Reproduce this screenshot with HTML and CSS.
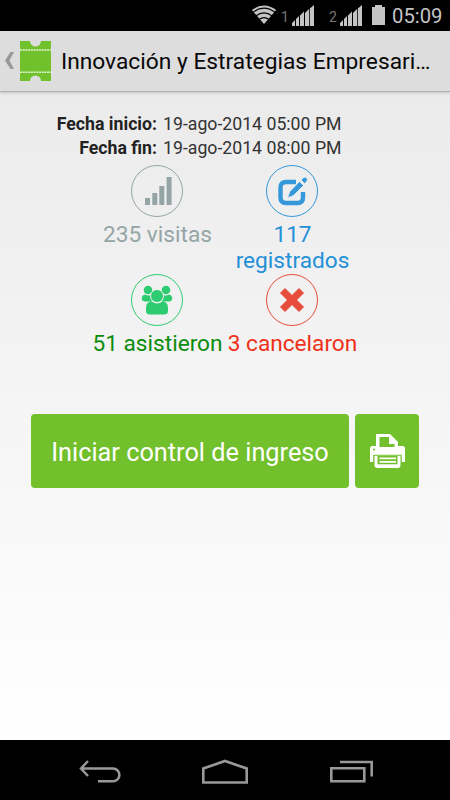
FILE: index.html
```html
<!DOCTYPE html>
<html lang="es">
<head>
<meta charset="utf-8">
<title>Innovación y Estrategias Empresariales</title>
<link rel="stylesheet" href="styles.css">
</head>
<body>
<div class="screen">
  <div class="status">
    <svg class="wifi" width="26" height="20" viewBox="0 0 26 20"><path d="M13 19 .8 5Q13-4 25.2 5Z" fill="#c4c4c4"/><path d="M2 7.200Q13-1 24 7.200M4.800 11Q13 4.800 21.200 11M8 14.500Q13 10.800 18 14.500" fill="none" stroke="#000" stroke-width="1.100"/></svg>
    <span class="sim sim1">1</span>
    <svg class="signal" width="22" height="21" viewBox="0 0 22 21"><path d="M0 21v-3l3-3v6zM4 21v-7l3-3v10zM8 21V10.500L12 6.500V21zM13 21V8L17 4v17zM17.800 21V3.500L22 0v21z" fill="#c4c4c4"/></svg>
    <span class="sim sim2">2</span>
    <svg class="signal" width="22" height="21" viewBox="0 0 22 21"><path d="M0 21v-3l3-3v6zM4 21v-7l3-3v10zM8 21V10.500L12 6.500V21zM13 21V8L17 4v17zM17.800 21V3.500L22 0v21z" fill="#c4c4c4"/></svg>
    <svg class="battery" width="13" height="20" viewBox="0 0 13 20"><path d="M3 0h7v2h3v18H0V2h3z" fill="#c4c4c4"/></svg>
    <span class="clock">05:09</span>
  </div>

  <header class="bar">
    <svg class="up" width="10" height="20" viewBox="0 0 10 20"><path d="M5.500 1H9L4.500 9.500 9 18H5.500L0 9.500z" fill="#999"/></svg>
    <svg class="logo" width="31" height="40" viewBox="0 0 31 40"><path d="M0 0h10a5.500 5.500 0 0 0 11 0h10v40H21a5.500 5.500 0 0 0-11 0H0z" fill="#70c12c"/><path d="M0 9h31M0 31.200h31" stroke="#e2f2d4" stroke-width="1.500" stroke-dasharray="2 .7"/></svg>
    <h1 class="title">Innovación y Estrategias Empresari…</h1>
  </header>

  <main class="content">
    <dl class="dates">
      <dt>Fecha inicio:</dt><dd>19-ago-2014 05:00 PM</dd>
      <dt>Fecha fin:</dt><dd>19-ago-2014 08:00 PM</dd>
    </dl>

    <section class="stats">
      <div class="stat visits">
        <svg width="52" height="52" viewBox="0 0 52 52" fill="#95a5a6"><circle cx="26" cy="26" r="25.500" fill="none" stroke="#95a5a6"/><path d="M14 33h5v7h-5zM21.300 28h5v12h-5zM28.300 21h5v19h-5zM35.600 12h5v28h-5z"/></svg>
        <span class="t-visits">235 visitas</span>
      </div>
      <div class="stat registered">
        <svg width="52" height="52" viewBox="0 0 52 52" fill="#3498db"><circle cx="26" cy="26" r="25.500" fill="none" stroke="#3498db"/><path d="M30 17H20q-5.500 0-5.500 5.500v10q0 5.500 5.500 5.500h11.500q5.500 0 5.500-5.500V27" fill="none" stroke="#3498db" stroke-width="4.400"/><path d="M21.500 33l2.300-6.500L33.500 16.500l4 4L27.500 30.500zM35 15l2.300-2.300q2-1.300 3.400.2 1.400 1.600.2 3.400L38.600 18.600z" stroke="#efefef" stroke-width=".8"/></svg>
        <span class="t-registered">117 registrados</span>
      </div>
      <div class="stat attended">
        <svg width="52" height="52" viewBox="0 0 52 52" fill="#2ecc71"><circle cx="26" cy="26" r="25.500" fill="none" stroke="#2ecc71"/><circle cx="17" cy="16" r="4.300"/><circle cx="35" cy="16" r="4.300"/><path d="M14 20.500q3 1.800 5.500.5 0 4 2 6.500h-8.300q-2.800-1-2.400-4 .3-2.500 3.200-3zM38 20.500q-3 1.800-5.500.5 0 4-2 6.500h8.300q2.800-1 2.400-4-.3-2.500-3.200-3z"/><circle cx="26" cy="22" r="6.500" stroke="#f1f1f1"/><path d="M20.500 27.500q5.500 4 11 0 5.500 0 5.500 6.500v3q0 3.500-4 3.500H19q-4 0-4-3.500v-3q0-6.500 5.500-6.500z"/></svg>
        <span class="t-attended">51 asistieron</span>
      </div>
      <div class="stat canceled">
        <svg width="52" height="52" viewBox="0 0 52 52" fill="#e74c3c"><circle cx="26" cy="26" r="25.500" fill="none" stroke="#e74c3c"/><path d="M19 14.500l7 7 7-7 4.500 4.500-7 7 7 7-4.500 4.500-7-7-7 7-4.500-4.500 7-7-7-7z" stroke="#e74c3c" stroke-width="1" stroke-linejoin="round"/></svg>
        <span class="t-canceled">3 cancelaron</span>
      </div>
    </section>

    <div class="actions">
      <button class="btn start"><span>Iniciar control de ingreso</span></button>
      <button class="btn print" aria-label="Imprimir"><svg width="35" height="34" viewBox="0 0 35 34"><path d="M6 0h14l8 8v5H6z" fill="#fff"/><path d="M9.500 13V3H19v7h5.500v3z" fill="#72c02c"/><path d="M21 1.500V8h6z" fill="#fff"/><path d="M2.500 12H6v1h22v-1h4.500q2.500 0 2.500 2.500V28H0V14.500Q0 12 2.500 12z" fill="#fff"/><circle cx="4" cy="15.500" r="1.100" fill="#72c02c"/><path d="M3 20.800h29V28h3v1H0v-1h3z" fill="#72c02c"/><path d="M0 20.800h3.200V28H0zM31.800 20.800H35V28h-3.200zM4.500 21.800h26V31q0 3-3 3h-20q-3 0-3-3z" fill="#fff"/><path d="M7.500 21.800h20v8.500h-20z" fill="#72c02c"/><path d="M9.500 23.500h16.500v1.800H9.500zM9.500 27h16.500v1.800H9.500z" fill="#fff"/></svg></button>
    </div>
  </main>

  <nav class="nav">
    <svg width="42" height="23" viewBox="0 0 42 23"><path d="M9 1 2 8.500 9 16M2 8.500h32a6.400 6.400 0 0 1 0 12.800H19" fill="none" stroke="#999" stroke-width="2.500"/></svg>
    <svg class="home" width="46" height="25" viewBox="0 0 46 25"><path d="M1.300 23.500V9.500L23 2l21.700 7.500v14z" fill="none" stroke="#999" stroke-width="2.600"/></svg>
    <svg width="44" height="23" viewBox="0 0 44 23"><path d="M1.300 8.300h33v13h-33zM10 2h31.700v14.500" fill="none" stroke="#999" stroke-width="2.600"/></svg>
  </nav>
</div>
</body>
</html>
```
FILE: styles.css
```css
* { box-sizing: border-box; }
body { margin: 0; font-family: Roboto, sans-serif; }
svg { display: block; flex: none; }

.screen { width: 450px; height: 800px; display: flex; flex-direction: column; overflow: hidden; background: #000; }

.status { height: 31px; flex: none; display: flex; padding: 5px 0 0 251px; color: #c4c4c4; white-space: nowrap; }
.sim { font-size: 14px; line-height: 25px; color: #777; }
.sim1 { width: 15px; padding-left: 4px; }
.sim2 { width: 26px; padding-left: 15px; }
.battery { margin-left: 10px; }
.clock { margin-left: 7px; font-size: 20.3px; line-height: 23px; }

.bar { position: relative; height: 61px; flex: none; display: flex; align-items: center; padding: 0 0 1px 5px; background: #ddd; border-bottom: 1px solid #b2b2b2; box-shadow: 0 1px 3px rgba(0, 0, 0, .18); }
.logo { margin-left: 5px; }
.title { margin: 3px 0 0 10px; font-size: 22.75px; line-height: 28px; font-weight: 400; white-space: nowrap; color: #080808; }

.content { flex: 1; background: linear-gradient(#ebebeb, #fff); }
.dates { display: grid; grid-template-columns: 157px 1fr; column-gap: 6px; margin: 0; padding-top: 20px; font-size: 17.7px; line-height: 24px; color: #333; white-space: nowrap; }
.dates dt { font-weight: 700; text-align: right; color: #222; }
.dates dd { margin: 0; }

.stats { display: grid; grid-template-columns: 135px 135px; grid-template-rows: 109px 109px; width: 270px; margin: 5px auto 0; font-size: 22.65px; line-height: 26px; text-align: center; }
.stat { display: flex; flex-direction: column; align-items: center; gap: 5px; }
.stat svg { margin-right: 1px; }
.visits { color: #95a5a6; }
.registered { color: #2490d8; }
.attended { color: #0b8c0b; white-space: nowrap; }
.canceled { color: #ee3018; white-space: nowrap; }

.actions { display: flex; gap: 6px; padding: 31px 0 0 31px; }
.btn { height: 74px; margin: 0; padding: 0; border: 0; border-radius: 4px; background: #72c02c; color: #fff; font: 25.3px Roboto, sans-serif; display: flex; align-items: center; justify-content: center; white-space: nowrap; }
.start { width: 318px; padding-top: 2px; }
.print { width: 64px; }

.nav { height: 60px; flex: none; display: flex; align-items: center; justify-content: space-between; padding: 2px 76px 0 79px; background: #000; }
.home { margin-right: 2px; }
```
